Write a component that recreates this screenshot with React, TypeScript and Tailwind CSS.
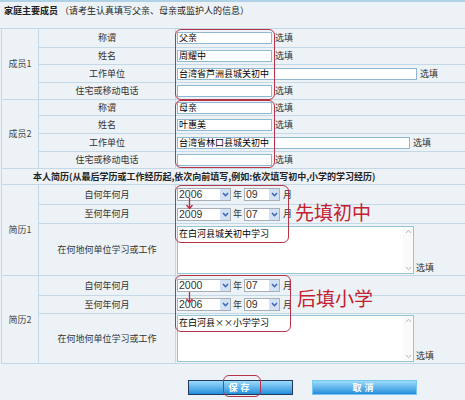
import React from "react";

const L = "border-[#c3d9e8]";

function Chev({ dir = "down", color = "#3d63b5", size = 7, sw = 1.8 }: { dir?: "down" | "up"; color?: string; size?: number; sw?: number }) {
  return (
    <svg width={size} height={size - 2} viewBox="0 0 8 6">
      {dir === "down" ? (
        <path d="M1 1.2 L4 4.5 L7 1.2" fill="none" stroke={color} strokeWidth={sw} />
      ) : (
        <path d="M1 4.8 L4 1.5 L7 4.8" fill="none" stroke={color} strokeWidth={sw} />
      )}
    </svg>
  );
}

function Inp({ v, w }: { v?: string; w: string }) {
  return (
    <div className={`h-[12px] border border-[#8fb9d3] bg-white text-[9px] leading-[10px] pl-[1px] text-black ${w}`}>{v}</div>
  );
}

function Opt() {
  return <span className="ml-[3px] text-[9px] leading-[10px] text-[#333]">选填</span>;
}

function Row({ h, label, children, last }: { h: string; label: string; children?: React.ReactNode; last?: boolean }) {
  return (
    <div className={`flex ${h} ${last ? "" : "border-b"} ${L}`}>
      <div className={`w-[137px] shrink-0 flex items-center justify-center border-r ${L} text-[9px] text-[#333]`}>{label}</div>
      <div className="flex-1 flex items-center pl-[1px]">{children}</div>
    </div>
  );
}

function Block({ label, children }: { label: string; children: React.ReactNode }) {
  return (
    <div className={`flex border-b ${L}`}>
      <div className={`w-[37px] shrink-0 flex items-center justify-center border-r ${L} text-[9px] text-[#444]`}>{label}</div>
      <div className="flex-1 flex flex-col">{children}</div>
    </div>
  );
}

function Sel({ v, w }: { v: string; w: string }) {
  return (
    <div className={`flex h-[13px] border border-[#a7afb9] bg-white ${w}`}>
      <span className="flex-1 pl-[1px] text-[10.5px] leading-[11px] text-[#333] font-['Liberation_Sans',sans-serif]">{v}</span>
      <span className="w-[10px] bg-[#d3e1f4] flex items-center justify-center">
        <Chev />
      </span>
    </div>
  );
}

function DateRow({ y, m }: { y: string; m: string }) {
  return (
    <div className="flex items-center">
      <Sel v={y} w="w-[54px]" />
      <span className="mx-[2px] text-[9px] text-[#333]">年</span>
      <Sel v={m} w="w-[36px]" />
      <span className="ml-[3px] text-[9px] text-[#333]">月</span>
    </div>
  );
}

function TA({ v, h }: { v: string; h: string }) {
  return (
    <div className="flex items-end">
      <div className={`flex w-[237px] ${h} border border-[#93c7d8] bg-white`}>
        <div className="flex-1 text-[9px] leading-[12px] pl-[1px] pt-[1px] text-black">{v}</div>
        <div className="w-[10px] flex flex-col justify-between items-center py-[2px] bg-[#fafafa]">
          <Chev dir="up" color="#b8b8b8" size={7} sw={1.2} />
          <Chev dir="down" color="#b8b8b8" size={7} sw={1.2} />
        </div>
      </div>
      <span className="ml-[2px] text-[9px] leading-[12px] text-[#333]">选填</span>
    </div>
  );
}

function RedBox({ cls }: { cls: string }) {
  return <div className={`absolute border-[1.5px] border-[#b73446] rounded-[6px] ${cls}`} />;
}

function Arrow({ cls }: { cls: string }) {
  return (
    <svg className={`absolute ${cls}`} width="9" height="12" viewBox="0 0 9 12">
      <path d="M4.5 0 L4.5 10" stroke="#c8283a" strokeWidth="1.3" />
      <path d="M1.5 7 L4.5 10.5 L7.5 7" fill="none" stroke="#c8283a" strokeWidth="1.3" />
    </svg>
  );
}

export default function App() {
  return (
    <div className="relative w-[465px] h-[400px] overflow-hidden bg-[#edf2f6] font-['Noto_Sans_CJK_SC','Liberation_Sans',sans-serif] text-[#333]">
      {/* title */}
      <div className={`h-[29px] border-t-2 border-t-[#b0d2e6] border-b ${L} pl-[4px] pt-[3px] text-[9px] leading-[12px] text-[#222]`}>
        <span className="font-bold">家庭主要成员</span>
        <span> （请考生认真填写父亲、母亲或监护人的信息）</span>
      </div>

      <div className={`ml-[1px] border-l ${L}`}>
        <Block label="成员1">
          <Row h="h-[19px]" label="称谓"><Inp v="父亲" w="w-[95px]" /><Opt /></Row>
          <Row h="h-[17px]" label="姓名"><Inp v="周耀中" w="w-[95px]" /><Opt /></Row>
          <Row h="h-[18px]" label="工作单位"><Inp v="台湾省芦洲县城关初中" w="w-[240px]" /><Opt /></Row>
          <Row h="h-[16px]" label="住宅或移动电话" last><Inp w="w-[95px]" /><Opt /></Row>
        </Block>
        <Block label="成员2">
          <Row h="h-[16px]" label="称谓"><Inp v="母亲" w="w-[95px]" /><Opt /></Row>
          <Row h="h-[18px]" label="姓名"><Inp v="叶惠美" w="w-[95px]" /><Opt /></Row>
          <Row h="h-[18px]" label="工作单位"><Inp v="台湾省林口县城关初中" w="w-[233px]" /><Opt /></Row>
          <Row h="h-[16px]" label="住宅或移动电话" last><Inp w="w-[95px]" /><Opt /></Row>
        </Block>
        <div className={`h-[16px] border-b ${L} flex items-center pl-[31px] text-[9px] font-bold text-[#222]`}>
          本人简历(从最后学历或工作经历起,依次向前填写,例如:依次填写初中,小学的学习经历)
        </div>
        <Block label="简历1">
          <Row h="h-[20px]" label="自何年何月"><DateRow y="2006" m="09" /></Row>
          <Row h="h-[19px]" label="至何年何月"><DateRow y="2009" m="07" /></Row>
          <Row h="h-[51px]" label="在何地何单位学习或工作" last><TA v="在白河县城关初中学习" h="h-[48px]" /></Row>
        </Block>
        <Block label="简历2">
          <Row h="h-[20px]" label="自何年何月"><DateRow y="2000" m="07" /></Row>
          <Row h="h-[18px]" label="至何年何月"><DateRow y="2006" m="09" /></Row>
          <Row h="h-[49px]" label="在何地何单位学习或工作" last><TA v="在白河县××小学学习" h="h-[47px]" /></Row>
        </Block>
      </div>

      <div className="flex pl-[188px] pt-[16px] gap-[19px]">
        <div className="w-[105px] h-[15px] border-[1.5px] border-[#22385f] bg-linear-to-b from-[#9adcfb] to-[#1d8edb] flex items-center justify-center text-white text-[9px] font-bold tracking-[3px]">保存</div>
        <div className="w-[105px] h-[15px] border border-[#79c6ef] bg-linear-to-b from-[#9adcfb] to-[#1d8edb] flex items-center justify-center text-white text-[9px] font-bold tracking-[3px]">取消</div>
      </div>

      {/* annotations */}
      <RedBox cls="left-[175px] top-[29px] w-[100px] h-[71px]" />
      <RedBox cls="left-[175px] top-[100px] w-[100px] h-[68px]" />
      <RedBox cls="left-[175px] top-[185px] w-[114px] h-[58px]" />
      <RedBox cls="left-[175px] top-[275px] w-[116px] h-[57px]" />
      <RedBox cls="left-[223px] top-[375px] w-[38px] h-[22px]" />
      <Arrow cls="left-[185px] top-[198px]" />
      <Arrow cls="left-[185px] top-[292px]" />
      <div className="absolute left-[295px] top-[202px] text-[19px] leading-[19px] text-[#c4202e]">先填初中</div>
      <div className="absolute left-[297px] top-[288px] text-[19px] leading-[19px] text-[#c4202e]">后填小学</div>
    </div>
  );
}
